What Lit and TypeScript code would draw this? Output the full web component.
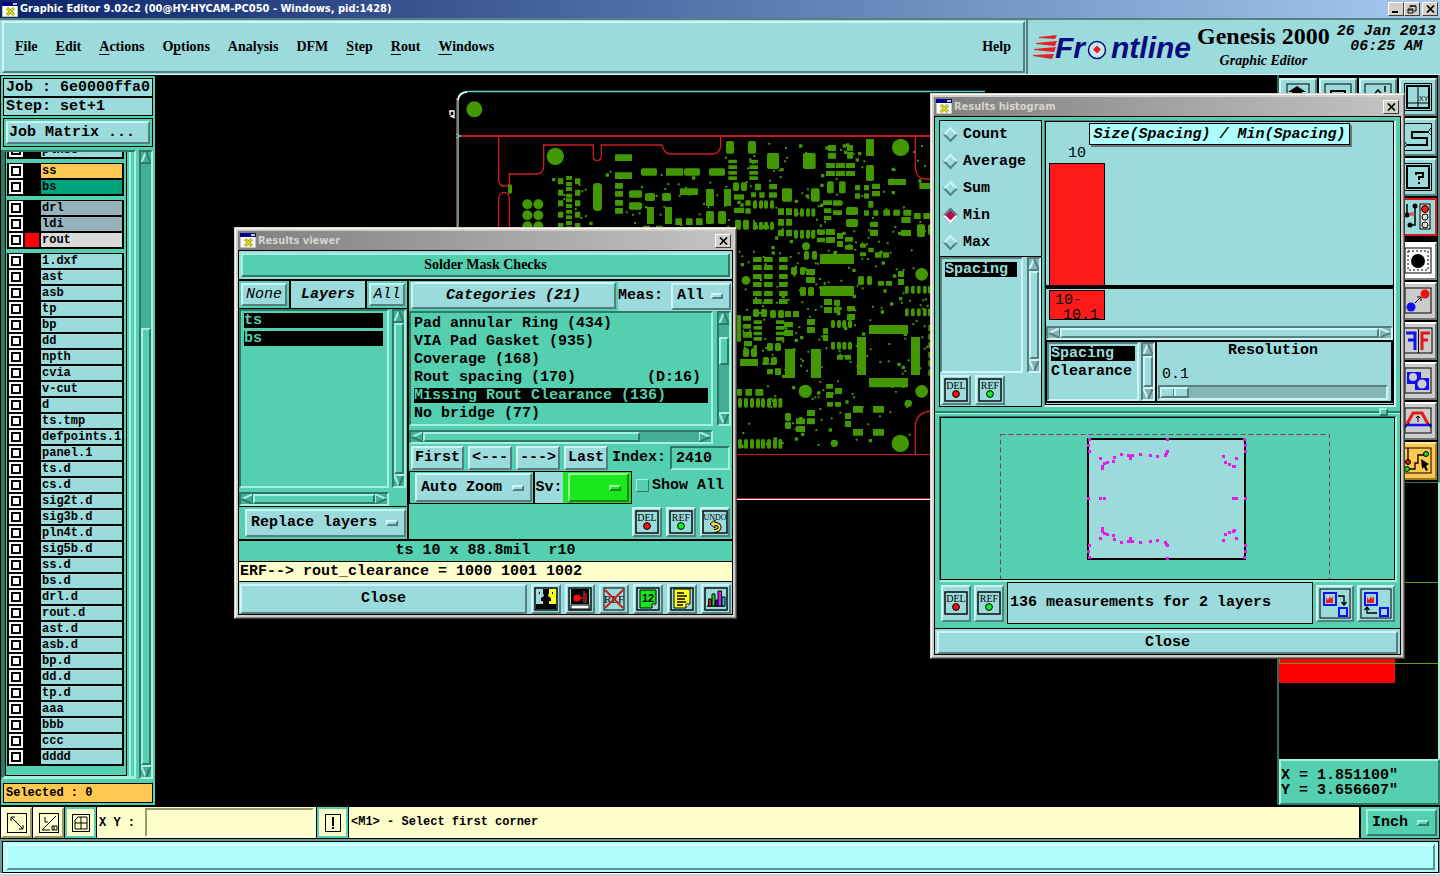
import { LitElement, html, svg, css, nothing } from "lit";
import { customElement, property, state } from "lit/decorators.js";
import { classMap } from "lit/directives/class-map.js";

/* ---------- shared look ---------- */

const base = css`
  * { box-sizing: border-box; }
  :host {
    font: bold 15px/18px "Liberation Mono", monospace;
    color: #000;
    --mono: "Liberation Mono", monospace;
    --serif: "Liberation Serif", serif;
  }
  button, input, select {
    font: inherit; color: inherit; margin: 0; padding: 0; border: 0;
    border-radius: 0; background: none; min-width: 0; outline: none;
  }
  ul { list-style: none; margin: 0; padding: 0; }
  svg { display: block; }
  .teal { --bg: #54cfaf; --hi: #a6f0de; --lo: #2d7b67; --trough: #43ae95; }
  .cyan { --bg: #9cdbdb; --hi: #cdf5f5; --lo: #587f80; --trough: #86b7b8; }
  .cream { --bg: #ffffcc; --hi: #ffffe6; --lo: #98986f; --trough: #e0e0b0; }
  .green { --bg: #1be81b; --hi: #9ff89f; --lo: #108a10; --trough: #10a010; }
  .fill { background: var(--bg); }
  .up { background: var(--bg); border: 2px solid; border-color: var(--hi) var(--lo) var(--lo) var(--hi); }
  .down { background: var(--bg); border: 2px solid; border-color: var(--lo) var(--hi) var(--hi) var(--lo); }

  .menu { display: grid; align-items: center; padding: 0 4px; }
  .menu select { grid-area: 1 / 1; width: 100%; appearance: none; }
  .menu i {
    grid-area: 1 / 1; justify-self: end; width: 12px; height: 6px; margin-right: 2px;
    pointer-events: none; border: 2px solid; border-color: var(--hi) var(--lo) var(--lo) var(--hi);
  }

  .bar { display: flex; background: var(--trough); border: 2px solid; border-color: var(--lo) var(--hi) var(--hi) var(--lo); }
  .bar.v { flex-direction: column; width: 14px; }
  .bar.h { height: 14px; }
  .bar svg { flex: none; width: 10px; height: 12px; }
  .bar.h svg { width: 12px; height: 10px; }
  .bar .thumb { background: var(--bg); border: 2px solid; border-color: var(--hi) var(--lo) var(--lo) var(--hi); }

  .list { padding: 2px; }
  .list li { height: 15px; line-height: 15px; margin-bottom: 3px; white-space: pre; }
  .list li.sel { background: #000; color: var(--bg); }

  .icon { display: flex; align-items: center; justify-content: center; width: 30px; height: 30px; }
`;

const windowStyle = css`
  :host { display: block; }
  .frame {
    border: 1px solid; border-color: #d4d0c8 #404040 #404040 #d4d0c8;
    box-shadow: inset 1px 1px #fff, inset -1px -1px #808080;
    background: #d4d0c8; padding: 3px;
  }
  .caption {
    display: flex; align-items: center; gap: 2px; height: 19px; padding: 0 2px;
    background: linear-gradient(90deg, #808080, #c4c4c4);
    color: #d8d4cc; font: bold 11px/16px "DejaVu Sans Condensed", "Noto Sans", sans-serif;
  }
  .caption span { flex: 1; }
  .caption button {
    width: 16px; height: 14px; background: #d4d0c8; border: 1px solid;
    border-color: #fff #404040 #404040 #fff; color: #000; display: grid; place-items: center;
  }
`;

const tri = (d: "up" | "down" | "left" | "right") => {
  const p = {
    up: ["M5 0 L0 11 ", "M5 0 L10 11 L0 11"],
    down: ["M5 12 L0 1", "M10 1 L5 12"],
    left: ["M12 0 L1 5", "M1 5 L12 10 V0"],
    right: ["M0 10 V0 L11 5", "M11 5 L0 10"],
  }[d];
  return html`<svg aria-hidden="true">
    <path d=${p[0]} fill="none" stroke="var(--hi)" stroke-width="2" />
    <path d=${p[1]} fill="none" stroke="var(--lo)" stroke-width="2" />
    ${d === "down" ? svg`<path d="M0 1H10" stroke="var(--hi)" stroke-width="2"/>` : nothing}
  </svg>`;
};

const scroll = (dir: "v" | "h", before: number, size: number, after: number) => html`
  <div class="bar ${dir}">
    ${tri(dir === "v" ? "up" : "left")}
    <span style="flex:${before}"></span>
    <span class="thumb" style="flex:${size}"></span>
    <span style="flex:${after}"></span>
    ${tri(dir === "v" ? "down" : "right")}
  </div>`;

const drop = (label: string, text: string, cls = "") => html`
  <span class="menu up ${cls}"><select aria-label=${label}><option>${text}</option></select><i></i></span>`;

const appIcon = html`<svg width="16" height="15" viewBox="0 0 16 15">
  <rect width="16" height="15" fill="#fff" stroke="#888" /><rect width="16" height="4" fill="#000080" />
  <path d="M11 1h4v2h-4z" fill="#c8c8c8" /><path d="M5 6l7 7M12 6l-7 7" stroke="#8a8a10" stroke-width="3" />
  <path d="M5 6l7 7M12 6l-7 7" stroke="#e8e020" stroke-width="1.6" /></svg>`;

const closeX = html`<svg width="9" height="8"><path d="M1 .5l7 7M8 .5l-7 7" stroke="#000" stroke-width="1.7" /></svg>`;

const tag = (word: string, extra: unknown) => html`<svg width="24" height="24" viewBox="0 0 24 24">
  <rect x="1" y="1" width="22" height="22" fill="none" stroke="#000" stroke-width="1.4" />
  <text x="12" y="11" text-anchor="middle" font-family="Liberation Serif" font-weight="400" font-size="10">${word}</text>
  ${extra}</svg>`;
const delIcon = tag("DEL", svg`<circle cx="12" cy="16" r="3.4" fill="#f01010" stroke="#000"/>`);
const refIcon = tag("REF", svg`<circle cx="12" cy="16" r="3.4" fill="#10f020" stroke="#000"/>`);
const undoIcon = html`<svg width="26" height="24" viewBox="0 0 26 24">
  <rect x="1" y="1" width="24" height="22" fill="none" stroke="#000" stroke-width="1.4" />
  <text x="13" y="10" text-anchor="middle" font-family="Liberation Serif" font-weight="400" font-size="8">UNDO</text>
  <path d="M12 21c8 0 7-8 0-7" fill="none" stroke="#000" stroke-width="4" />
  <path d="M8 14l5-4v8z" fill="#ffe040" stroke="#000" />
  <path d="M12 21c8 0 7-8 0-7" fill="none" stroke="#ffe040" stroke-width="2" /></svg>`;

const box = (inner: unknown) => html`<svg width="24" height="24" viewBox="0 0 24 24">
  <rect x="1" y="1" width="22" height="22" fill="none" stroke="#000" stroke-width="1.4" />${inner}</svg>`;
const footIcons: [string, unknown][] = [
  ["Compare", box(svg`<rect x="2" y="2" width="10" height="15" fill="#9cdbdb"/>
    <rect x="13" y="2" width="9" height="15" fill="#ffff20"/>
    <path d="M9 2h6v4l-1 3 3 2v3h-2v3h7v5H2v-5h7v-3H7v-3l3-2-1-3z"/><path d="M5 5h1v2H5zM18 5h1v2h-1z"/>`)],
  ["Snapshot", box(svg`<rect x="3" y="2" width="18" height="15"/><circle cx="9" cy="11" r="3.6" fill="#f01010"/>
    <path d="M12 11h3M16 4v12M18 6v10" stroke="#b02020" stroke-width="1.6"/>
    <rect x="3" y="18" width="18" height="4" fill="#fff" stroke="#000"/>`)],
  ["Clear reference", html`<svg width="24" height="24" viewBox="0 0 24 24">
    <rect x="2" y="1" width="20" height="22" fill="none" stroke="#000"/>
    <text x="12" y="16" text-anchor="middle" font-family="Liberation Serif" font-weight="400" font-size="11">REF</text>
    <path d="M3 3l18 18M21 3L3 21" stroke="#d01818" stroke-width="1.8"/></svg>`],
  ["Number", box(svg`<path d="M4 3h16v14l-4 4H4z" fill="#18e818" stroke="#000"/>
    <path d="M16 21v-4h4" fill="#fff" stroke="#000"/>
    <text x="12" y="15" text-anchor="middle" font-family="Liberation Sans" font-size="11">12</text>`)],
  ["Report", box(svg`<path d="M4 2h16v15l-4 4H4z" fill="#ffff20" stroke="#000"/>
    <path d="M16 21v-4h4" fill="#fff" stroke="#000"/>
    <path d="M7 6h7M7 9h10M7 12h8M7 15h9M7 18h6" stroke="#000" stroke-width="1.3"/>`)],
  ["Histogram", box(svg`<path d="M3 19h18" stroke="#000" stroke-width="1.4"/>
    <path d="M4.5 12h3v7h-3z" fill="#e01818" stroke="#000"/><path d="M8 7h3v12H8z" fill="#18e018" stroke="#000"/>
    <path d="M11.500 13h3v6h-3z" fill="#1818e0" stroke="#000"/><path d="M14 4h3.500v15H14z" fill="#e018e0" stroke="#000"/>
    <path d="M18 10h3v9h-3z" fill="#18c8e0" stroke="#000"/>`)],
];

/* ---------- results viewer ---------- */

@customElement("results-viewer")
class ResultsViewer extends LitElement {
  @state() selected = 4;
  categories = [
    ["Pad annular Ring (434)", ""], ["VIA Pad Gasket (935)", ""], ["Coverage (168)", ""],
    ["Rout spacing (170)", "(D:16)"], ["Missing Rout Clearance (136)", ""], ["No bridge (77)", ""],
  ];

  static styles = [base, windowStyle, css`
    .body { border: 1px solid #000; background: #000; display: flex; flex-direction: column; }
    .head { padding: 2px; margin-bottom: 2px; }
    .head h2 { margin: 0; text-align: center; font: bold 14px/20px var(--serif); }
    .cols { display: flex; gap: 2px; }
    .left { width: 169px; display: flex; flex-direction: column; gap: 1px; }
    .right { flex: 1; display: flex; flex-direction: column; }
    .tabs { display: flex; gap: 2px; height: 27px; }
    .tabs > div { padding: 2px; display: flex; }
    .tabs button { font-weight: normal; font-style: italic; width: 46px; }
    .tabs .all { width: 36px; }
    .tabs .name { flex: 1; display: grid; place-items: center; font-style: italic; }
    .scroller { flex: 1; display: grid; grid-template: 1fr 14px / 1fr 14px; gap: 4px 3px; padding-right: 1px; }
    .left .list { padding: 2px 4px 2px 3px; }
    .left .menu { height: 28px; flex: 1; padding-left: 4px; }
    .replace { display: flex; padding: 2px 1px 2px 6px; }
    .top { display: flex; height: 30px; }
    .top .cat { width: 205px; font-style: italic; margin: 1px 2px 2px; }
    .meas { flex: 1; display: flex; align-items: center; justify-content: space-between; }
    .meas .menu { width: 60px; height: 27px; margin-right: 1px; }
    .mid { height: 133px; flex: none; column-gap: 4px; }
    .mid li { display: flex; justify-content: space-between; padding-right: 7px; margin-right: 1px; }
    .mid .list { padding: 3px 2px 0 3px; }
    .nav { display: flex; align-items: center; gap: 4px; padding: 2px 2px 1px; }
    .nav button { height: 24px; flex: none; width: 44px; }
    .nav .first { width: 53px; }
    .nav label { display: flex; flex: 1; gap: 4px; align-items: center; justify-content: space-between; white-space: nowrap; }
    .nav input { width: 60px; height: 24px; padding-left: 4px; }
    .zoom { display: flex; align-items: center; height: 33px; }
    .zoom .grp { display: flex; height: 33px; border: 1px solid #000; }
    .zoom .auto { padding: 1px 1px 1px 5px; border-right: 2px solid #000; display: flex; }
    .zoom .auto .menu { width: 117px; }
    .zoom .sv { width: 28px; display: grid; place-items: center; }
    .zoom .sw { padding: 1px 2px 1px 5px; display: flex; }
    .zoom .sw .menu { width: 61px; }
    .show { display: flex; gap: 3px; align-items: center; margin: 0 0 4px 4px; white-space: nowrap; }
    .show input { appearance: none; width: 13px; height: 13px; border: 1px solid; border-color: var(--hi) var(--lo) var(--lo) var(--hi); }
    .acts { display: flex; gap: 4px; justify-content: flex-end; padding: 3px 2px 2px; flex: 1; }
    .msg { height: 20px; margin-top: 2px; display: grid; place-items: center; white-space: pre; }
    .erf { height: 19px; line-height: 19px; margin-top: 1px; padding-left: 1px; }
    .foot { display: flex; align-items: center; gap: 4px; padding: 2px 1px 0; margin-top: 1px; }
    .foot .close { flex: 1; height: 30px; }
  `];

  render() {
    return html`<section class="frame" aria-label="Results viewer">
      <div class="caption">${appIcon}<span>Results viewer</span><button aria-label="Close window">${closeX}</button></div>
      <div class="body">
        <div class="head cyan fill"><h2 class="teal up">Solder Mask Checks</h2></div>
        <div class="cols">
          <div class="left">
            <div class="tabs">
              <div class="teal fill"><button class="cyan up">None</button></div>
              <span class="name cyan fill">Layers</span>
              <div class="teal fill"><button class="cyan up all">All</button></div>
            </div>
            <div class="scroller teal fill">
              <ul class="list down" role="listbox" aria-label="Layers">
                <li class="sel" role="option" aria-selected="true">ts</li>
                <li class="sel" role="option" aria-selected="true">bs</li>
              </ul>
              ${scroll("v", 0, 1, 0)}${scroll("h", 0, 1, 0)}
            </div>
            <div class="replace teal fill">${drop("Layer mode", "Replace layers", "cyan")}</div>
          </div>
          <div class="right teal fill">
            <div class="top">
              <button class="cat cyan up">Categories (21)</button>
              <div class="meas cyan fill"><span>Meas:</span>${drop("Measurements", "All")}</div>
            </div>
            <div class="scroller mid">
              <ul class="list down" role="listbox" aria-label="Categories">
                ${this.categories.map(([t, d], i) => html`<li role="option" aria-selected=${i === this.selected}
                  class=${classMap({ sel: i === this.selected })} @click=${() => (this.selected = i)}>
                  <span>${t}</span><span>${d}</span></li>`)}
              </ul>
              ${scroll("v", 13, 25, 50)}${scroll("h", 0, 214, 59)}
            </div>
            <div class="nav">
              <button class="first cyan up">First</button><button class="cyan up">&lt;---</button>
              <button class="cyan up">---&gt;</button><button class="cyan up">Last</button>
              <label>Index:<input class="down" value="2410" /></label>
            </div>
            <div class="zoom">
              <div class="grp">
                <div class="auto">${drop("Zoom mode", "Auto Zoom", "cyan")}</div>
                <span class="sv cyan fill">Sv:</span>
                <div class="sw green fill">${drop("Severity", "")}</div>
              </div>
              <label class="show"><input type="checkbox" />Show All</label>
            </div>
            <div class="acts">
              <button class="icon cyan up" aria-label="Delete">${delIcon}</button>
              <button class="icon cyan up" aria-label="Reference">${refIcon}</button>
              <button class="icon cyan up" aria-label="Undo">${undoIcon}</button>
            </div>
          </div>
        </div>
        <div class="msg teal fill">ts 10 x 88.8mil  r10</div>
        <div class="erf cream fill">ERF--&gt; rout_clearance = 1000 1001 1002</div>
        <div class="foot cyan fill">
          <button class="close up">Close</button>
          ${footIcons.map(([n, i]) => html`<button class="icon up" aria-label=${n}>${i}</button>`)}
        </div>
      </div>
    </section>`;
  }
}

/* ---------- results histogram ---------- */

const mirrored = [
  [484, 115], [481, 133], [484, 151], [949, 115], [952, 133], [952, 151], [718, 113], [517, 172], [523, 194],
  [523, 202], [529, 187], [538, 184], [556, 181], [559, 169], [580, 160], [601, 163], [607, 164], [611, 163],
  [607, 172], [637, 160], [667, 163], [688, 166], [712, 161], [715, 155], [718, 151], [886, 166], [892, 184],
  [904, 190], [916, 194], [919, 196], [925, 172],
];
const middle = [[481, 292], [517, 292], [529, 292], [916, 292], [925, 292], [952, 292]];
const dots = [...mirrored, ...mirrored.map(([x, y]) => [x, 584 - y]), ...middle];

const moveIcon = (back: boolean) => html`<svg width="32" height="31" viewBox="0 0 32 31">
  <rect x="1" y="1" width="30" height="29" fill="none" stroke="#000" />
  <rect x="5" y="5" width="12" height="12" fill="#9cdbdb" stroke="#1010f0" stroke-width="2" />
  <path d="M7 15V9l2 3 2-4 1 3 2-3v7z" fill="#f01818" />
  <rect x="20" y="20" width="8" height="8" fill="none" stroke="#1010f0" stroke-width="2" />
  ${back ? svg`<path d="M17 25H7v-6M4.500 22L7 19l2.500 3" fill="none" stroke="#000" stroke-width="1.3"/>`
    : svg`<path d="M19 8h6v9M22.500 14l2.500 3 2.500-3" fill="none" stroke="#000" stroke-width="1.3"/>`}</svg>`;

@customElement("results-histogram")
class ResultsHistogram extends LitElement {
  @state() stat = "Min";
  stats = ["Count", "Average", "Sum", "Min", "Max"];

  static styles = [base, windowStyle, css`
    .body { border: 1px solid #000; }
    .panes { display: flex; gap: 2px; padding: 3px 4px 1px; }
    .side { width: 103px; border: 1px solid #000; display: flex; flex-direction: column; }
    .radios { border: 0; border-bottom: 1px solid #000; margin: 0; padding: 0 0 0 4px; }
    .radios label { display: flex; align-items: center; gap: 6px; height: 27px; }
    .radios input {
      appearance: none; width: 11px; height: 11px; transform: rotate(45deg);
      border: 2px solid; border-color: var(--hi) var(--lo) var(--lo) var(--hi); margin: 0 1px;
    }
    .radios input:checked { background: #c00850; border-color: var(--lo) #fff #fff var(--lo); }
    .radios input:not(:checked) { border-color: var(--hi) var(--lo) var(--lo) var(--hi); }
    .pick { display: flex; gap: 4px; height: 116px; }
    .pick ul { flex: 1; }
    .pick .list { padding: 3px 4px 3px 3px; }
    .acts { display: flex; gap: 4px; padding: 2px 1px 1px; }
    .main { flex: 1; display: flex; flex-direction: column; border-width: 1px 2px 2px 1px; }
    .inner { flex: 1; border: 1px solid #000; display: flex; flex-direction: column; }
    .plot { height: 163px; display: flex; flex-direction: column; padding: 1px 3px 0; }
    .plot h3 {
      align-self: center; margin: 0; padding: 2px 3px 0; border: 1px solid #000; background: #b0ffff;
      font: italic bold 15px/18px var(--mono); box-shadow: 2px 2px #687878;
    }
    .col { width: 56px; flex: 1; display: flex; flex-direction: column; text-align: center; font-weight: normal; line-height: 18px; }
    .col i { flex: 1; background: #ff1a1a; border: 1px solid #000; border-bottom: 0; }
    .axis { height: 41px; border-top: 4px solid #000; padding: 1px 3px; }
    .axis span {
      display: flex; flex-direction: column; width: 56px; height: 30px; background: #ff1a1a;
      border: 1px solid #000; font-weight: normal; line-height: 15px; padding: 2px 5px;
    }
    .axis b { font-weight: normal; align-self: flex-end; }
    .fields { display: flex; height: 63px; border: 2px solid #000; border-left-width: 1px; }
    .fields .list { flex: none; width: 92px; padding: 2px; }
    .fields .bar { margin-left: 2px; }
    .res { flex: 1; border-left: 2px solid #000; display: flex; flex-direction: column; padding: 0 3px 1px 1px; }
    .res label { text-align: center; }
    .res output { padding: 6px 0 1px 4px; font-weight: normal; }
    .res input { appearance: none; width: 100%; height: 15px; background: var(--trough); border: 2px solid; border-color: var(--lo) var(--hi) var(--hi) var(--lo); }
    .res input::-webkit-slider-thumb {
      appearance: none; width: 29px; height: 11px; border: 2px solid;
      border-color: var(--hi) var(--lo) var(--lo) var(--hi);
      background: linear-gradient(90deg, var(--bg) 11px, var(--lo) 11px 12px, var(--hi) 12px 14px, var(--bg) 14px);
    }
    .sash { display: flex; align-items: center; height: 8px; }
    .sash::before, .sash::after { content: ""; flex: 1; height: 2px; background: var(--lo); border-bottom: 1px solid var(--hi); }
    .sash::after { flex: 0 0 12px; }
    .sash i { width: 9px; height: 8px; }
    .map { margin: 0 3px 0 4px; border-width: 1px 2px 2px 1px; }
    .map svg { width: 100%; height: 163px; border: 1px solid #000; }
    .info { display: flex; align-items: center; gap: 3px; padding: 0 5px 4px 6px; }
    .info .icon { height: 37px; }
    .info .big { width: 38px; }
    .info output { flex: 1; height: 42px; border: 1px solid #000; line-height: 40px; padding-left: 2px; white-space: nowrap; }
    .foot { border-top: 1px solid #000; padding: 2px 2px 0; display: flex; }
    .foot button { flex: 1; height: 23px; }
  `];

  render() {
    return html`<section class="frame" aria-label="Results histogram">
      <div class="caption">${appIcon}<span>Results histogram</span><button aria-label="Close window">${closeX}</button></div>
      <div class="body teal fill">
        <div class="panes">
          <div class="side cyan fill">
            <fieldset class="radios" aria-label="Statistic">
              ${this.stats.map((s) => html`<label><input type="radio" name="stat" .checked=${s === this.stat}
                @change=${() => (this.stat = s)} />${s}</label>`)}
            </fieldset>
            <div class="pick">
              <ul class="list down" role="listbox" aria-label="Measure"><li class="sel" role="option">Spacing</li></ul>
              ${scroll("v", 0, 1, 0)}
            </div>
            <div class="acts">
              <button class="icon up" aria-label="Delete">${delIcon}</button>
              <button class="icon up" aria-label="Reference">${refIcon}</button>
            </div>
          </div>
          <div class="main cyan down">
            <div class="inner">
              <div class="plot">
                <h3>Size(Spacing) / Min(Spacing)</h3>
                <div class="col">10<i></i></div>
              </div>
              <div class="axis"><span>10-<b>10.1</b></span></div>
              ${scroll("h", 0, 1, 0)}
              <div class="fields">
                <ul class="list down" role="listbox" aria-label="Field">
                  <li class="sel" role="option">Spacing</li><li role="option">Clearance</li>
                </ul>
                ${scroll("v", 0, 1, 0)}
                <div class="res">
                  <label for="res">Resolution</label><output for="res">0.1</output>
                  <input id="res" type="range" min="0" max="10" step="0.1" value="0" />
                </div>
              </div>
            </div>
          </div>
        </div>
        <div class="sash"><i class="up"></i></div>
        <div class="map teal down">
          <svg role="img" aria-label="Measurement map"><g transform="translate(-941 -417)">
            <rect x="1000.5" y="433.5" width="329" height="180" fill="none" stroke="#93306f" stroke-dasharray="5 3" />
            <rect x="1088" y="438" width="157" height="120" fill="#9cdbdb" stroke="#000" stroke-width="2" />
            ${dots.map(([x, y]) => svg`<rect x=${Math.round(928 + x / 3 - 1)} y=${Math.round(400 + y / 3 - 1)} width="3" height="3" fill="#e818e8"/>`)}
          </g></svg>
        </div>
        <div class="info">
          <button class="icon cyan up" aria-label="Delete">${delIcon}</button>
          <button class="icon cyan up" aria-label="Reference">${refIcon}</button>
          <output class="cyan fill">136 measurements for 2 layers</output>
          <button class="icon big cyan up" aria-label="Send to list">${moveIcon(false)}</button>
          <button class="icon big cyan up" aria-label="Take from list">${moveIcon(true)}</button>
        </div>
        <div class="foot cyan fill"><button class="up">Close</button></div>
      </div>
    </section>`;
  }
}

/* ---------- board artwork: x y w h in thirds of a pixel ---------- */

const quads = (s: string) => s.trim().split(/\s*;\s*/).filter(Boolean).map((q) => q.split(" ").map(Number));
const row = (xs: number[], ys: number[], w: number, h: number) => xs.flatMap((x) => ys.map((y) => [x, y, w, h]));

const upper = [
  ...quads(`828 168 24 38;894 168 24 38;951 204 36 48;1059 204 38 48;1134 180 24 18;1134 203 24 18;1191 180 18 18;1191 201 18 20;
  1248 162 24 51;1248 240 24 48;495 208 51 20;495 262 51 20;573 250 48 22;648 250 51 22;702 250 48 22;777 250 48 22;690 310 54 20;
  768 312 24 51;822 312 21 51;768 378 24 39;804 378 24 39;591 366 21 51;645 366 21 51;537 316 39 22;537 352 39 22;585 324 30 24;
  636 324 27 24;676 400 20 20;708 400 20 20;738 400 20 20;849 292 18 26;873 292 18 26;852 328 30 16;852 368 30 16;903 322 15 15;
  915 296 18 20;928 322 16 16;957 297 24 16;957 322 24 16;886 346 16 16;886 370 16 16;996 310 30 40;1083 310 26 40;1131 289 20 36;1167 289 20 36;
  1119 346 27 14;1149 346 27 16;1122 370 22 14;1122 392 22 14;1149 376 27 14;1188 366 36 24;1188 402 36 24;1266 296 24 16;1266 318 24 16;
  1314 282 54 18;1408 294 32 18;1300 374 20 18;1330 374 20 18;1360 374 24 18;1354 396 28 18;1392 384 20 18;1420 384 20 18;
  1401 418 24 32;1434 418 10 32;1260 410 24 16;1260 434 24 16;1255 348 15 20;1242 376 15 16;1270 376 15 16;1128 434 27 16;
  1104 434 20 16;1354 436 28 14;855 404 18 30;879 404 18 30;580 422 20 8;618 422 20 8;174 298 12 28`),
  ...row([1128, 1158, 1188], [234, 258], 27, 15), ...row([495], [294, 318, 345, 369], 24, 17),
  ...row([324, 375], [280, 314, 346, 380, 414], 16, 18), ...row([348], [273, 291, 306, 326, 340, 357, 374, 391, 408, 424], 18, 12),
  ...row([835, 898], [224, 241, 258, 274], 26, 11), ...row([909, 927, 942, 960], [346, 410], 12, 25),
  ...row([984, 1008], [370, 402, 434], 18, 20), ...row([1032, 1050, 1068, 1084], [370, 434], 12, 25),
  ...row([1215, 1242], [300, 325], 15, 16),
];
const lower = [
  ...quads(`270 87 102 30;270 183 102 30;417 300 117 27;417 459 117 28;381 336 27 114;543 336 27 114;165 372 30 87;243 372 30 87;
  30 402 54 21;183 126 18 24;210 126 15 24;228 132 27 18;228 156 27 18;222 78 15 26;246 78 15 26;210 186 18 27;234 186 18 27;
  288 12 27 18;288 36 27 18;261 14 24 14;261 38 24 14;321 24 18 18;321 48 18 18;345 36 24 14;345 60 24 14;420 15 24 18;
  513 15 30 18;561 0 24 36;435 82 20 16;459 82 18 16;384 153 18 27;411 153 15 27;444 168 18 14;468 168 18 14;504 138 18 18;
  504 162 18 18;282 222 24 18;312 224 18 18;282 246 24 18;312 246 18 18;351 243 24 15;351 267 24 18;69 252 18 24;93 252 18 24;
  120 255 18 24;144 255 18 24;165 258 18 18;189 258 18 18;162 291 27 16;162 315 27 18;231 282 24 18;231 306 24 18;279 309 15 18;
  279 330 15 18;321 390 18 14;345 390 18 14;21 270 12 80;39 273 24 14;39 297 24 14;39 320 27 18;42 348 24 16;39 370 18 26;
  63 370 18 26;111 354 18 24;135 354 18 24;99 396 18 24;123 396 18 24;111 432 18 16;135 430 18 20;288 477 21 14;315 489 21 18;
  288 501 21 18;291 531 18 14;315 531 18 14;165 564 18 24;165 590 18 22;198 580 27 18;231 555 24 18;231 580 24 18;198 603 27 18;
  345 564 18 18;345 588 18 18;369 543 30 20;429 543 33 20;369 612 30 20;429 612 33 20;144 15 18 18;168 15 18 18;21 492 15 20;
  46 492 20 20;76 492 24 20;390 82 18 12;390 56 18 12;415 68 16 14;595 300 8 18;595 326 8 18;595 352 8 18;595 380 8 18;595 406 8 18;595 434 8 18`),
  ...row([69, 102, 147], [96, 120, 147, 171, 198, 222], 26, 15),
  ...row([24, 42, 60, 78, 93, 111, 129, 145], [519, 642], 12, 29), ...row([525, 543, 561, 579, 594], [182, 250], 11, 24),
  ...row([303, 321, 337, 354], [285, 350], 12, 24), ...row([192, 210, 228, 243], [16], 12, 25),
  ...row([71, 138], [286, 303, 320, 336], 25, 11), ...row([72, 90, 105, 120], [0], 12, 12),
];

/* repeatable spread of small vias */
const vias = (seed: number, n: number, x0: number, y0: number, w: number, h: number) => {
  let s = seed;
  const next = () => (s = (s * 16807) % 2147483647) / 2147483647;
  return Array.from({ length: n }, () => {
    const d = next() > 0.8 ? 10 : 6;
    return [Math.round(x0 + next() * w), Math.round(y0 + next() * h), d, d];
  });
};
const rects = (list: number[][]) => list.map(([x, y, w, h]) => svg`<rect x=${x} y=${y} width=${w} height=${h} rx=${w > 9 && w < 50 && h > 20 && h < 50 ? 5 : 1}/>`);
const discs = (list: number[][]) => list.map(([x, y, r]) => svg`<circle cx=${x} cy=${y} r=${r}/>`);

const board = html`<svg class="board" width="1285" height="730" role="img" aria-label="Board view">
  <g transform="translate(-155 -75)">
    <path d="M458 499V100Q458 92 468 91.500H985" fill="none" stroke="#5fd0d0" stroke-width="1.5" />
    <path d="M456.500 98V499" stroke="#c02020" /><path d="M458 100Q459 93 467 92" fill="none" stroke="#fff" stroke-width="1.5" />
    <path d="M735 454.500H935M735 498.500H935" stroke="#c81c1c" />
    <path d="M461 136H935" stroke="#c81c1c" stroke-width="2" /><path d="M735 499.500H935" stroke="#fff" />
    <path d="M456 134l5 2-5 2" fill="none" stroke="#8cc" />
    <path d="M449 111h5v5h-3M450 116l5 2M450 111v4" fill="none" stroke="#fff" stroke-width="1.300" />
    <g transform="translate(450 85) scale(.33333)">
      <g fill="#439700">${rects(upper)}${rects(vias(77, 90, 820, 170, 610, 270))}${rects(vias(5, 40, 300, 250, 500, 175))}
        ${discs([[73, 73, 24], [316, 214, 26], [1352, 187, 26], [232, 358, 15], [265, 358, 15], [232, 391, 15], [265, 391, 15], [232, 424, 15], [265, 424, 15]])}
        <rect x="429" y="294" width="27" height="84" rx="11" /></g>
      <path fill="none" stroke="#d01c1c" stroke-width="4" d="M146 154V288Q150 304 164 304Q174 304 178 295V267H262Q282 264 281 240V180H430V215Q432 227 442 227Q454 225 454 212V180H636Q642 207 662 207H788Q812 205 812 180V154M146 430V340Q150 322 162 322Q176 322 178 340V430M1396 154V250Q1400 282 1425 282H1440" />
    </g>
    <g transform="translate(730 225) scale(.33333)">
      <g fill="#439700">${rects(lower)}${rects(vias(1234, 190, 25, 10, 570, 440))}${rects(vias(99, 50, 25, 460, 520, 200))}
        ${discs([[226, 499, 20], [511, 655, 26], [575, 148, 19], [575, 499, 19], [48, 166, 13], [228, 64, 12], [313, 655, 11], [535, 535, 11]])}</g>
      <path d="M556 688V600Q560 562 604 558" fill="none" stroke="#d01c1c" stroke-width="4" />
    </g>
  </g></svg>`;

/* ---------- tool buttons ---------- */

const tools: [string, string, unknown][] = [
  ["Home", "", svg`<path d="M16 6l9 6h-4v3H11v-3H7z"/><rect x="6" y="4" width="22" height="24" fill="none" stroke="#000"/>`],
  ["Area", "", svg`<rect x="10" y="11" width="14" height="12" fill="none" stroke="#000" stroke-width="2"/><rect x="4" y="4" width="26" height="24" fill="none" stroke="#000"/>`],
  ["Line", "", svg`<path d="M10 18l7-8 7 8M24 6v6" fill="none" stroke="#000" stroke-width="1.500"/><rect x="4" y="4" width="26" height="24" fill="none" stroke="#000"/>`],
  ["Coordinates", "", svg`<rect x="3.500" y="3.500" width="27" height="27" fill="none" stroke="#000"/><rect x="6" y="6" width="22" height="22" fill="none" stroke="#000" stroke-width="2"/><path d="M17 6v22M6 23h22" stroke="#000"/><text x="18" y="21" font-size="7" font-weight="400" font-family="Liberation Sans">XY</text>`],
  ["Net", "", svg`<rect x="3.500" y="3.500" width="27" height="27" fill="none" stroke="#000"/><path d="M27 12H11v6H26v7H6" fill="none" stroke="#000" stroke-width="2"/><path d="M27 12l3-4M6 25l-3-4M27 12l3 3M6 25l-3 3" stroke="#000"/>`],
  ["Help tool", "", svg`<rect x="3.500" y="3.500" width="27" height="27" fill="none" stroke="#000"/><rect x="6" y="6" width="22" height="22" fill="none" stroke="#000" stroke-width="2"/><path d="M15 15v-2h7v4h-4v3M18 22v2" fill="none" stroke="#000" stroke-width="2"/>`],
  ["Check", "red", svg`<rect x="19" y="4" width="10" height="25" fill="#dcdcdc" stroke="#000"/><circle cx="24" cy="9" r="3.500" fill="#f02020" stroke="#000"/><circle cx="24" cy="17" r="3" fill="none" stroke="#000"/><circle cx="24" cy="25" r="3" fill="none" stroke="#000"/><circle cx="14" cy="6" r="2.500"/><circle cx="6" cy="15" r="2.500"/><circle cx="9" cy="25" r="2.500"/><path d="M14 6v19H9M6 4v11" fill="none" stroke="#000" stroke-width="1.500"/><path d="M9 15h5M9 12v3M11 12v3M13 12v3" stroke="#e02020"/>`],
  ["Pad", "white", svg`<rect x="4" y="4" width="26" height="25" fill="none" stroke="#000"/><rect x="7" y="7" width="20" height="19" fill="none" stroke="#000" stroke-dasharray="2 2"/><circle cx="17" cy="17" r="7"/>`],
  ["Move", "gray", svg`<rect x="4" y="4" width="26" height="25" fill="none" stroke="#000"/><circle cx="24" cy="10" r="4.500" fill="#f01010"/><circle cx="10" cy="23" r="4.500" fill="#1010f0"/><path d="M14 19l6-6M16 13h4v4" fill="none" stroke="#000"/>`],
  ["Mirror", "gray", svg`<rect x="3" y="4" width="28" height="25" fill="none" stroke="#000"/><path d="M5 9h9v17M7 16h7" fill="none" stroke="#1010f0" stroke-width="3"/><path d="M29 9h-8v17M27 16h-6" fill="none" stroke="#e01818" stroke-width="3"/><path d="M17.500 5v24" stroke="#000"/>`],
  ["Shapes", "gray", svg`<rect x="4" y="4" width="26" height="25" fill="none" stroke="#000"/><path d="M6 8h14v6h8v12H14v-6H6z" fill="#1010f0"/><circle cx="12" cy="13" r="4" fill="#ccc"/><circle cx="21" cy="20" r="4.500" fill="#ccc"/>`],
  ["Profile", "gray", svg`<rect x="4" y="4" width="26" height="25" fill="none" stroke="#000"/><path d="M4 21h27" stroke="#1010f0" stroke-width="2.500"/><path d="M6 20l6-11h9l6 11" fill="none" stroke="#e81818" stroke-width="3"/><path d="M17 18v-6M15 14l2-2 2 2M4 24l4-5M27 19l3 5" fill="none" stroke="#000"/>`],
  ["Select net", "orange", svg`<rect x="3" y="4" width="27" height="25" fill="none" stroke="#000"/><path d="M7 4v14M7 25h7v-6h3v-8h7" fill="none" stroke="#000" stroke-width="1.300"/><circle cx="7" cy="18" r="2.500" fill="#c02010" stroke="#000"/><circle cx="6" cy="25" r="2.500" fill="#20d820" stroke="#000"/><circle cx="25" cy="10" r="2.500" fill="#20d820" stroke="#000"/><path d="M20 15l8 5-3 2 2 4-2 1-2-4-2 2z"/>`],
];

const groups: { name: string; tone?: string }[][] = [
  [{ name: "plnss" }],
  [{ name: "ss", tone: "amber" }, { name: "bs", tone: "jade" }],
  [{ name: "drl", tone: "slate" }, { name: "ldi", tone: "slate" }, { name: "rout", tone: "pale" }],
  "1.dxf ast asb tp bp dd npth cvia v-cut d ts.tmp defpoints.1 panel.1 ts.d cs.d sig2t.d sig3b.d pln4t.d sig5b.d ss.d bs.d drl.d rout.d ast.d asb.d bp.d dd.d tp.d aaa bbb ccc dddd"
    .split(" ").map((name) => ({ name })),
];

const menus: [string, string, string][] = [
  ["", "F", "ile"], ["", "E", "dit"], ["", "A", "ctions"], ["O", "p", "tions"], ["Analysis", "", ""],
  ["DFM", "", ""], ["", "S", "tep"], ["", "R", "out"], ["", "W", "indows"],
];

const logo = html`<svg width="162" height="44" viewBox="1032 25 162 44" role="img" aria-label="Frontline">
  <path d="M1038 37l18-2-2 4-16-1zM1035 43l21-2-2 5-19-2zM1033 49l22-2-2 5-20-2zM1032 55l21-1-2 5-19-3z" fill="#e82020" />
  <g font-family="Liberation Sans" font-style="italic" font-weight="700" font-size="30" fill="#0a0a80">
    <text x="1054" y="58">Fr</text><text x="1110" y="58">ntline</text></g>
  <circle cx="1096" cy="50" r="8.500" fill="#c4ecec" stroke="#0a0a80" stroke-width="1.500" />
  <path d="M1096 45.500l4 4-4 4-4-4z" fill="#f01818" /></svg>`;

/* ---------- page ---------- */

@customElement("app-root")
class AppRoot extends LitElement {
  @property() job = "6e0000ffa0";

  static styles = [base, css`
    :host { display: flex; flex-direction: column; height: 100vh; background: #000; position: relative; overflow: hidden; }
    .title {
      display: flex; align-items: center; gap: 2px; height: 18px; flex: none; padding: 0 2px;
      background: linear-gradient(90deg, #0a246a, #a6caf0); color: #fff;
      font: bold 11px/16px "DejaVu Sans Condensed", "Noto Sans", sans-serif; white-space: nowrap;
    }
    .title span { flex: 1; }
    .title button { width: 16px; height: 14px; background: #d4d0c8; border: 1px solid; border-color: #fff #404040 #404040 #fff; display: grid; place-items: center; }
    .title .min { margin-right: -2px; }
    header { display: flex; height: 57px; flex: none; background: var(--bg); border-top: 2px solid var(--lo); border-bottom: 1px solid var(--hi); font: bold 14px/20px var(--serif); }
    nav { flex: 1; display: flex; align-items: center; gap: 18px; padding: 0 12px 0 11px; margin: 1px 1px 1px 2px; }
    nav u { text-underline-offset: 3px; }
    nav .help { margin-left: auto; }
    .brand { display: flex; align-items: center; width: 414px; border-left: 2px solid var(--lo); padding: 0 3px 0 5px; gap: 2px; }
    .brand .prod { text-align: center; white-space: nowrap; }
    .brand h1 { margin: 0; font: bold 24px/28px var(--serif); }
    .brand em { display: block; line-height: 22px; }
    .brand time { flex: 1; text-align: center; font: italic bold 15px/15px var(--mono); align-self: flex-start; padding: 4px 0 0 4px; white-space: nowrap; }
    main { flex: 1; display: flex; min-height: 0; }
    aside { width: 154px; margin-left: 1px; padding: 2px; display: flex; flex-direction: column; flex: none; margin-top: 1px; }
    .cell { border: 1px solid #000; height: 19px; line-height: 17px; padding-left: 2px; white-space: pre; flex: none; }
    .matrix { border: 1px solid #000; padding: 2px; margin-top: 2px; display: flex; flex: none; }
    .matrix button { flex: 1; height: 23px; text-align: left; padding-left: 1px; }
    .layers { flex: 1; display: flex; gap: 3px; min-height: 0; margin: 3px 0 4px -2px; }
    .view { flex: 1; border-width: 2px 2px 3px 4px; padding: 0 7px 0 0; min-height: 0; }
    .stack {
      height: 100%; border: 1px solid #000; border-top: 0; padding: 0 2px 9px 1px; overflow: hidden;
      display: flex; flex-direction: column; justify-content: flex-end; gap: 4px;
      font: bold 12px/14px var(--mono); box-shadow: 2px 0 #54cfaf, 4px 0 #a6f0de;
    }
    .stack ul { background: #000; padding: 1px 2px 2px; display: flex; flex-direction: column; gap: 2px; flex: none; }
    .stack label { display: flex; gap: 2px; height: 14px; }
    .stack input { appearance: none; width: 14px; height: 14px; background: #fff; border: 2px solid #fff; box-shadow: inset 0 0 0 2px #000; }
    .stack i { width: 14px; }
    .stack i.on { background: #f00; }
    .stack span { flex: 1; background: #9cdbdb; padding-left: 1px; white-space: nowrap; }
    .stack .amber { background: #ffc850; } .stack .jade { background: #00a47c; }
    .stack .slate { background: #97b3bd; } .stack .pale { background: #dadada; }
    .selected { border: 1px solid #000; background: #ffc850; font: bold 12px/18px var(--mono); padding-left: 2px; flex: none; }
    .canvas { flex: 1; overflow: hidden; min-width: 0; }
    .right { width: 163px; flex: none; display: flex; flex-direction: column; border-left: 2px solid #2d6b5c; }
    .tools { display: grid; grid-template-columns: repeat(4, 38px); gap: 2px; padding: 3px 1px 2px 0; border-right: 2px solid var(--lo); background: #000; }
    .tools button { height: 38px; display: grid; place-items: center; grid-column: 4; }
    .tools button:nth-child(-n + 4) { grid-column: auto; }
    .tools .red { border-color: #e01818; }
    .tools .white { --bg: #fff; --hi: #fff; --lo: #808080; margin-top: 4px; }
    .tools .gray { --bg: #ccc; --hi: #fff; --lo: #707070; }
    .tools .orange { --bg: #ffc850; --hi: #ffe8a0; --lo: #a07820; }
    .preview { flex: 1; min-height: 0; overflow: hidden; border-right: 2px solid #a6f0de; border-top: 1px solid #2d7b67; }
    .coords { padding: 7px 1px 5px 0; line-height: 15px; white-space: pre; }
    .prompt { display: flex; height: 35px; flex: none; border: 2px solid #000; border-width: 2px 1px; gap: 1px; font: bold 12px/18px var(--mono); background: #000; }
    .prompt .icon { width: 31px; height: 31px; }
    .prompt .on { border-color: #54cfaf; }
    .prompt label { display: flex; align-items: center; gap: 10px; padding: 0 2px; white-space: pre; }
    .prompt input { width: 169px; height: 29px; padding-left: 4px; }
    .prompt p { margin: 0; flex: 1; line-height: 31px; padding-left: 2px; }
    .prompt .unit { width: 78px; padding: 2px 2px 2px 5px; display: grid; font-size: 15px; margin-left: 1px; }
    .status { height: 32px; flex: none; background: #b0ffff; border: 1px solid #000; margin: 1px 1px 0 2px; padding: 2px 3px; box-shadow: 0 0 0 2px #6f9797; }
    .status div { height: 100%; border: 2px solid; border-color: #d8ffff #5a9090 #5a9090 #d8ffff; }
    .edge { height: 3px; flex: none; background: #d4d0c8; border-top: 1px solid #fff; z-index: 1; }
    results-viewer { position: absolute; left: 234px; top: 227px; width: 503px; }
    results-histogram { position: absolute; left: 930px; top: 93px; width: 475px; }
  `];

  render() {
    return html`
      <div class="title">${appIcon}<span>Graphic Editor 9.02c2 (00@HY-HYCAM-PC050 - Windows, pid:1428)</span>
        <button class="min" aria-label="Minimize"><svg width="10" height="8"><path d="M1 6h6v2H1z" /></svg></button>
        <button aria-label="Restore"><svg width="10" height="9" fill="none" stroke="#000"><path d="M3 2.500V1h6v5H7M3 1h6M1 4h5v4H1zM1 5h5" /></svg></button>
        <button aria-label="Close">${closeX}</button>
      </div>
      <header class="cyan">
        <nav class="up">
          ${menus.map(([a, u, b]) => html`<button>${a}${u ? html`<u>${u}</u>` : nothing}${b}</button>`)}
          <button class="help">Help</button>
        </nav>
        <div class="brand">
          ${logo}
          <div class="prod"><h1>Genesis 2000</h1><em>Graphic Editor</em></div>
          <time>26 Jan 2013<br />06:25 AM</time>
        </div>
      </header>
      <main>
        <aside class="teal fill">
          <div class="cell cyan fill">Job : ${this.job}</div>
          <div class="cell cyan fill">Step: set+1</div>
          <div class="matrix"><button class="cyan up">Job Matrix ...</button></div>
          <div class="layers">
            <div class="view down"><div class="stack">
              ${groups.map((g) => html`<ul>${g.map((l) => html`<li><label><input type="checkbox" /><i
                class=${classMap({ on: l.name === "rout" })}></i><span class=${l.tone ?? ""}>${l.name}</span></label></li>`)}</ul>`)}
            </div></div>
            ${scroll("v", 166, 438, 0)}
          </div>
          <div class="selected">Selected : 0</div>
        </aside>
        <div class="canvas">${board}</div>
        <div class="right teal">
          <div class="tools cyan">
            ${tools.map(([n, c, i]) => html`<button class="up ${c}" aria-label=${n}><svg width="34" height="34">${i}</svg></button>`)}
          </div>
          <div class="preview"><svg width="161" height="280" role="img" aria-label="Overview">
            <g transform="translate(-1279 -484)">
              <rect x="1278" y="640" width="117" height="44" fill="#f00" />
              <path d="M1278 583.500H1440M1279.500 655v9.500H1440" fill="none" stroke="#5f9a2a" /></g></svg></div>
          <div class="coords teal up">X = 1.851100"
Y = 3.656607"</div>
        </div>
      </main>
      <div class="prompt">
        <button class="icon cream up" aria-label="Drag mode"><svg width="20" height="20" fill="none" stroke="#000"><rect x=".5" y=".5" width="19" height="19" /><path d="M4 4l12 12M4 8V4h4M16 12v4h-4" /></svg></button>
        <button class="icon cream up" aria-label="Angle mode"><svg width="20" height="20" fill="none" stroke="#000"><rect x=".5" y=".5" width="19" height="19" /><path d="M3 17L17 3M3 17h8M6 4v5h3M13 13h5v4h-5zM15 13v4" /></svg></button>
        <button class="icon cream up on" aria-label="Grid mode"><svg width="18" height="18" fill="none" stroke="#000"><rect x=".5" y=".5" width="17" height="17" /><path d="M6 3h9v12H3V6zM9 3v12M3 9h12" /></svg></button>
        <label class="cream fill">X Y :<input class="cream down" aria-label="Coordinates" /></label>
        <button class="icon cream up on" aria-label="Alert"><svg width="16" height="18" fill="none" stroke="#000"><rect x=".5" y=".5" width="15" height="17" /><path d="M8 3v9M8 13v2" stroke-width="2" /></svg></button>
        <p class="cream fill">&lt;M1&gt; - Select first corner</p>
        <div class="unit teal fill">${drop("Units", "Inch")}</div>
      </div>
      <div class="status"><div></div></div>
      <div class="edge"></div>
      <results-viewer></results-viewer>
      <results-histogram></results-histogram>`;
  }
}
